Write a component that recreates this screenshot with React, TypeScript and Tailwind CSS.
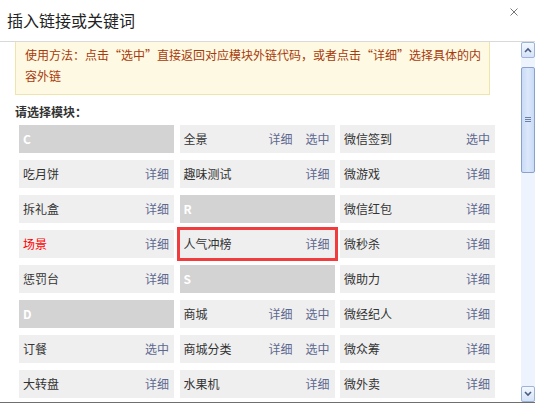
import React from "react";

type Cell =
  | { head: string }
  | { name: string; detail?: boolean; pick?: boolean; red?: boolean; hot?: boolean };

const rows: Cell[][] = [
  [{ head: "C" }, { name: "全景", detail: true, pick: true }, { name: "微信签到", pick: true }],
  [{ name: "吃月饼", detail: true }, { name: "趣味测试", detail: true }, { name: "微游戏", detail: true }],
  [{ name: "拆礼盒", detail: true }, { head: "R" }, { name: "微信红包", detail: true }],
  [{ name: "场景", detail: true, red: true }, { name: "人气冲榜", detail: true, hot: true }, { name: "微秒杀", detail: true }],
  [{ name: "惩罚台", detail: true }, { head: "S" }, { name: "微助力", detail: true }],
  [{ head: "D" }, { name: "商城", detail: true, pick: true }, { name: "微经纪人", detail: true }],
  [{ name: "订餐", pick: true }, { name: "商城分类", detail: true, pick: true }, { name: "微众筹", detail: true }],
  [{ name: "大转盘", detail: true }, { name: "水果机", detail: true }, { name: "微外卖", detail: true }],
];

const ModuleCell = ({ cell }: { cell: Cell }) => {
  if ("head" in cell) {
    return (
      <div className="h-[28px] bg-[#d3d3d3] pl-[4px] flex items-center text-[12px] font-bold text-white">
        {cell.head}
      </div>
    );
  }
  return (
    <div
      className={
        "h-[28px] bg-[#efefef] pl-[4px] pr-[5px] flex items-center text-[12px] " +
        (cell.hot ? "outline-solid outline-[3px] outline-[#f03c3c]" : "")
      }
    >
      <span className={cell.red ? "text-[#ff0000]" : "text-[#333333]"}>{cell.name}</span>
      <span className="ml-auto flex gap-[13px] text-[#5d6890]">
        {cell.detail && <span>详细</span>}
        {cell.pick && <span>选中</span>}
      </span>
    </div>
  );
};

const ScrollBar = () => (
  <div className="w-[14px] h-full bg-[#eef4fd] flex flex-col">
    <div className="h-[16px] border border-[#9fb3d5] rounded-[2px] bg-gradient-to-b from-[#f4f8fe] to-[#d4e2f7] flex items-center justify-center">
      <svg width="8" height="6" viewBox="0 0 8 6">
        <path d="M1 5 L4 2 L7 5" fill="none" stroke="#4a5d80" strokeWidth="1.6" />
      </svg>
    </div>
    <div className="mt-[9px] h-[106px] border border-[#8aa2cb] rounded-[2px] bg-gradient-to-r from-[#c9dbf6] via-[#dce8fb] to-[#c9dbf6] flex items-center justify-center">
      <svg width="6" height="6" viewBox="0 0 6 6">
        <path d="M0 0.5 H6 M0 2.5 H6 M0 4.5 H6" stroke="#6b80a6" strokeWidth="1" />
      </svg>
    </div>
    <div className="flex-1" />
    <div className="h-[16px] border border-[#9fb3d5] rounded-[2px] bg-gradient-to-b from-[#f4f8fe] to-[#d4e2f7] flex items-center justify-center">
      <svg width="8" height="6" viewBox="0 0 8 6">
        <path d="M1 1 L4 4 L7 1" fill="none" stroke="#4a5d80" strokeWidth="1.6" />
      </svg>
    </div>
  </div>
);

export default function App() {
  return (
    <div
      className="w-[535px] h-[403px] bg-white flex flex-col overflow-hidden"
      style={{ fontFamily: '"Noto Sans CJK SC", "Noto Sans", sans-serif' }}
    >
      <div className="h-[42px] shrink-0 border-b border-[#d9d9d9] flex items-start relative">
        <h1 className="pl-[7px] pt-[9px] text-[16px] leading-[22px] text-[#222]">插入链接或关键词</h1>
        <svg className="absolute left-[510px] top-[8px]" width="8" height="8" viewBox="0 0 8 8">
          <path d="M0.5 0.5 L7.5 7.5 M7.5 0.5 L0.5 7.5" stroke="#777" strokeWidth="1" />
        </svg>
      </div>

      <div className="flex-1 flex border-b border-[#6f6f6f] min-h-0">
        <div className="flex-1 overflow-hidden">
          <div className="ml-[15px] w-[475px] bg-[#fdf9e3] border-x border-b border-[#efe5ac] pl-[9px] pt-[2px] pb-[8px] text-[12px] leading-[21px] text-[#a83a0a] whitespace-nowrap">
            使用方法：点击“选中”直接返回对应模块外链代码，或者点击“详细”选择具体的内
            <br />
            容外链
          </div>

          <div className="ml-[15px] mt-[8px] h-[18px] leading-[18px] text-[12px] font-bold text-[#333]">
            请选择模块：
          </div>

          <div className="ml-[19px] mt-[4px] grid grid-cols-[155px_155px_155px] gap-x-[5.5px] gap-y-[7px]">
            {rows.flat().map((c, i) => (
              <ModuleCell key={i} cell={c} />
            ))}
          </div>
        </div>
        <ScrollBar />
      </div>
    </div>
  );
}
